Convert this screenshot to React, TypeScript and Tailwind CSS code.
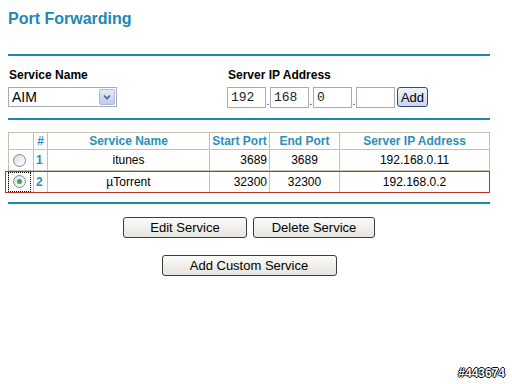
import React from "react";

const rows = [
  { n: 1, name: "itunes", start: "3689", end: "3689", ip: "192.168.0.11", on: false, h: "h-[21px]" },
  { n: 2, name: "\u00b5Torrent", start: "32300", end: "32300", ip: "192.168.0.2", on: true, h: "h-[22px]" },
];

function Radio({ on }: { on: boolean }) {
  return (
    <span className="inline-flex w-[13px] h-[13px] rounded-full border border-[#7b8a99] bg-gradient-to-br from-[#d9dde2] to-[#ffffff] items-center justify-center">
      {on && <span className="w-[5px] h-[5px] rounded-full bg-[#3cab3c]" />}
    </span>
  );
}

function IpBox({ v }: { v: string }) {
  return (
    <div className="w-[39px] h-[21px] border border-[#a5acb5] bg-white px-[3px] flex items-center text-[13px] font-['Liberation_Mono',monospace] text-[#222]">
      {v}
    </div>
  );
}

function Btn({ label, w }: { label: string; w: string }) {
  return (
    <button className={`${w} h-[21px] rounded-[3px] border border-[#3c3c3c] bg-gradient-to-b from-[#fbfbfa] to-[#e5e4df] text-[13px] text-black leading-none`}>
      {label}
    </button>
  );
}

export default function App() {
  return (
    <div className="w-[512px] h-[384px] bg-white relative font-['Liberation_Sans',Arial,sans-serif] text-black">
      <div className="pl-[8px] pr-[22px]">
        <h1 className="pt-[9px] text-[16px] font-bold leading-[19px] text-[#2287b3]">Port Forwarding</h1>

        <div className="mt-[26px] h-[2px] bg-[#1d88ad]" />

        <div className="mt-[12px] flex">
          <div className="w-[219px]">
            <div className="text-[12px] font-bold leading-[14px] pl-[1px]">Service Name</div>
            <div className="mt-[5px] w-[109px] h-[20px] border border-[#a5acb5] flex items-center">
              <span className="flex-1 pl-[3px] text-[14px]">AIM</span>
              <span className="w-[16px] h-[16px] mr-[1px] rounded-[2px] border border-[#a9bbd8] bg-gradient-to-b from-[#e3ebf8] to-[#bccbe9] flex items-center justify-center">
                <svg width="8" height="6" viewBox="0 0 8 6">
                  <path d="M1 1.5 L4 4.5 L7 1.5" stroke="#4d6185" strokeWidth="1.6" fill="none" />
                </svg>
              </span>
            </div>
          </div>
          <div>
            <div className="text-[12px] font-bold leading-[14px] pl-[1px]">Server IP Address</div>
            <div className="mt-[5px] flex items-end">
              <IpBox v="192" />
              <span className="w-[4px] text-[10px] leading-none pb-[1px] text-center">.</span>
              <IpBox v="168" />
              <span className="w-[4px] text-[10px] leading-none pb-[1px] text-center">.</span>
              <IpBox v="0" />
              <span className="w-[4px] text-[10px] leading-none pb-[1px] text-center">.</span>
              <IpBox v="" />
              <button className="ml-[2px] w-[31px] h-[20px] mb-[1px] rounded-[3px] border border-[#2f4a7a] bg-gradient-to-b from-[#f0f4fb] to-[#c9d6ec] text-[13px] leading-none">
                Add
              </button>
            </div>
          </div>
        </div>

        <div className="mt-[10px] h-[2px] bg-[#1d88ad]" />

        <div className="relative mt-[12px]">
          <table className="w-[482px] border-collapse text-[12px] leading-[14px] text-center">
            <thead>
              <tr className="text-[#2b8fba] font-bold">
                <th className="h-[17px] p-0 w-[25px] border border-[#c9c0ae]"></th>
                <th className="h-[17px] p-0 w-[14px] border border-[#c9c0ae]">#</th>
                <th className="h-[17px] p-0 w-[162px] border border-[#c9c0ae]">Service Name</th>
                <th className="h-[17px] p-0 w-[60px] border border-[#c9c0ae]">Start Port</th>
                <th className="h-[17px] p-0 w-[70px] border border-[#c9c0ae]">End Port</th>
                <th className="h-[17px] p-0 border border-[#c9c0ae]">Server IP Address</th>
              </tr>
            </thead>
            <tbody>
              {rows.map((r) => (
                <tr key={r.n}>
                  <td className={`${r.h} p-0 border border-[#c9c0ae] text-right pr-[3px]`}>
                    <span className={`inline-flex items-center justify-center w-[21px] h-[18px] align-middle ${r.on ? "outline outline-1 outline-dotted outline-black" : ""}`}>
                      <Radio on={r.on} />
                    </span>
                  </td>
                  <td className={`${r.h} p-0 border border-[#c9c0ae] text-left pl-[2px] text-[#2b8fba] font-bold`}>{r.n}</td>
                  <td className={`${r.h} p-0 border border-[#c9c0ae]`}>{r.name}</td>
                  <td className={`${r.h} p-0 border border-[#c9c0ae] text-right pr-[2px]`}>{r.start}</td>
                  <td className={`${r.h} p-0 border border-[#c9c0ae]`}>{r.end}</td>
                  <td className={`${r.h} p-0 border border-[#c9c0ae]`}>{r.ip}</td>
                </tr>
              ))}
            </tbody>
          </table>
          <div className="absolute left-[-3px] top-[39px] w-[485px] h-[22px] border border-[#c0302c] pointer-events-none" />
        </div>

        <div className="mt-[9px] h-[2px] bg-[#1d88ad]" />

        <div className="mt-[13px] flex justify-center gap-[6px]">
          <Btn label="Edit Service" w="w-[124px]" />
          <Btn label="Delete Service" w="w-[122px]" />
        </div>
        <div className="mt-[17px] flex justify-center">
          <Btn label="Add Custom Service" w="w-[175px]" />
        </div>
      </div>

      <div className="absolute right-[7px] bottom-[2px] text-[12px] font-bold text-white [text-shadow:1px_0_0_#000,-1px_0_0_#000,0_1px_0_#000,0_-1px_0_#000]">
        #443674
      </div>
    </div>
  );
}
